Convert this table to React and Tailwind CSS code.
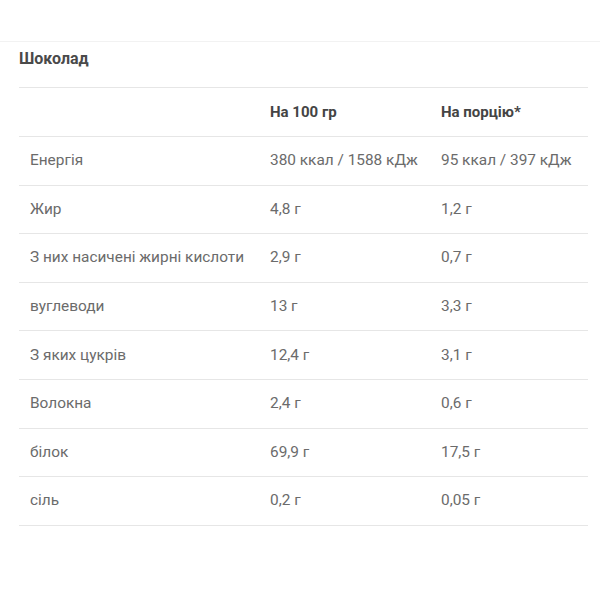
import React from "react";

const rows = [
  ["Енергія", "380 ккал / 1588 кДж", "95 ккал / 397 кДж"],
  ["Жир", "4,8 г", "1,2 г"],
  ["З них насичені жирні кислоти", "2,9 г", "0,7 г"],
  ["вуглеводи", "13 г", "3,3 г"],
  ["З яких цукрів", "12,4 г", "3,1 г"],
  ["Волокна", "2,4 г", "0,6 г"],
  ["білок", "69,9 г", "17,5 г"],
  ["сіль", "0,2 г", "0,05 г"],
];

function App() {
  return (
    <div
      className="w-[600px] h-[600px] bg-white pt-[41px]"
      style={{ fontFamily: "Roboto, 'Liberation Sans', sans-serif" }}
    >
      <div className="border-t border-[#f2f2f2] pl-[19px] pr-[12px]">
        <h2 className="h-[45px] pt-[5px] text-[16px] font-bold text-[#4a4a4a]">
          Шоколад
        </h2>
        <div className="border-t border-[#e6e6e6]">
          <div className="flex h-[49px] items-center border-b border-[#e6e6e6] text-[15px] font-bold text-[#444]">
            <div className="w-[251px]"></div>
            <div className="w-[171px]">На 100 гр</div>
            <div>На порцію*</div>
          </div>
          {rows.map((r) => (
            <div
              key={r[0]}
              className="flex h-[48.6px] items-center border-b border-[#e6e6e6] text-[15.4px] text-[#6b6b6b]"
            >
              <div className="w-[251px] pl-[11px]">{r[0]}</div>
              <div className="w-[171px]">{r[1]}</div>
              <div>{r[2]}</div>
            </div>
          ))}
        </div>
      </div>
    </div>
  );
}

export default App;
